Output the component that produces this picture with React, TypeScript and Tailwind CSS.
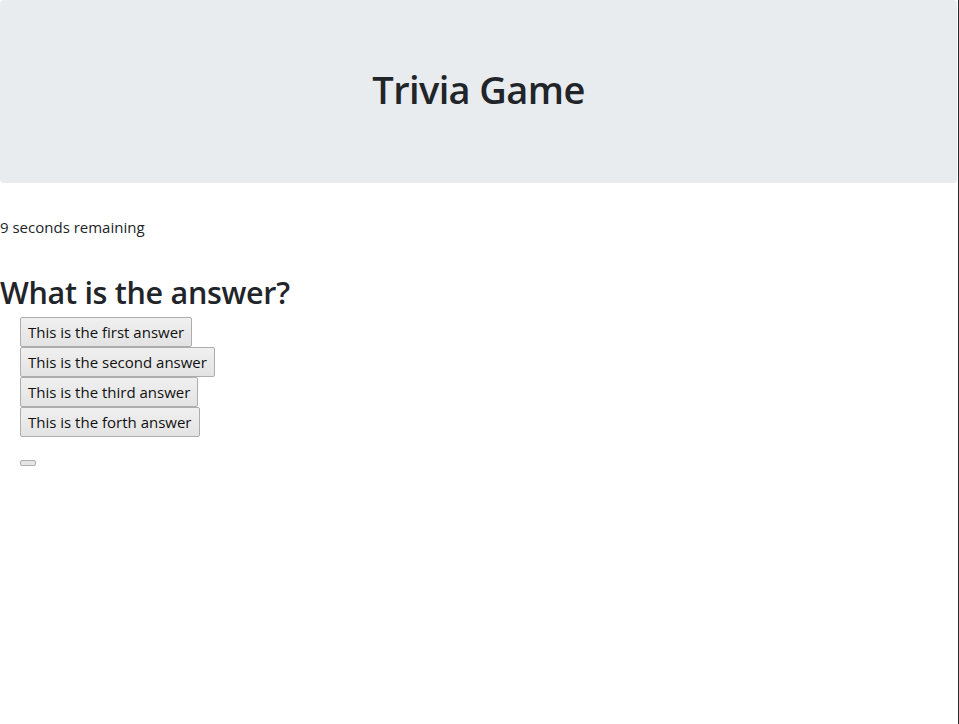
const answers = [
  "This is the first answer",
  "This is the second answer",
  "This is the third answer",
  "This is the forth answer",
];

export default function App() {
  return (
    <div className="min-h-[724px] w-[959px] border-r border-[#2b2b2b] pr-px bg-white text-[#212529] font-['Open_Sans','Noto_Sans',sans-serif]">
      {/* Header */}
      <div className="bg-[#e9ecef] rounded-[4px] h-[183px] flex items-center justify-center">
        <h1 className="text-[38px] font-semibold leading-[1.2] tracking-[-0.6px] mt-[-4px]">Trivia Game</h1>
      </div>

      <p className="mt-[32px] text-[15px] leading-6">9 seconds remaining</p>

      <h2 className="mt-[34px] text-[30.5px] font-semibold leading-[38px] tracking-[-0.3px]">What is the answer?</h2>

      <div className="mt-[6px] pl-5 flex flex-col items-start">
        {answers.map((a) => (
          <button
            key={a}
            className="h-[30px] px-[7px] text-[15px] leading-6 border border-[#adadad] rounded-[2px] bg-gradient-to-b from-[#f0f0f0] to-[#e3e3e3] text-[#111]"
          >
            {a}
          </button>
        ))}
        <button className="mt-[23px] w-4 h-[6px] border border-[#adadad] rounded-[2px] bg-[#e5e5e5]" />
      </div>
    </div>
  );
}
